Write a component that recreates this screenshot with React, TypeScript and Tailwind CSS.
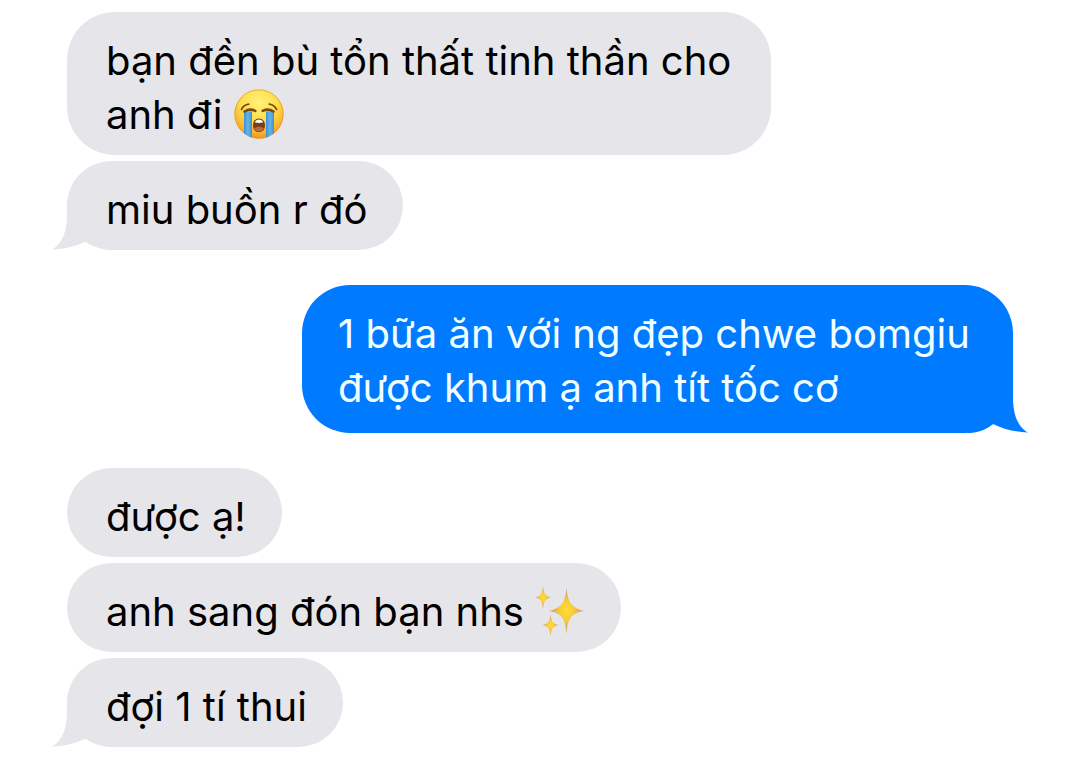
import clsx from 'clsx';
import type { ReactNode } from 'react';

type Message = {
	id: number;
	from: 'me' | 'them';
	body: ReactNode;
	tail?: boolean;
	width?: string;
};

function CryingFace() {
	return (
		<svg
			role="img"
			aria-label="Loudly crying face"
			viewBox="0 0 50 50"
			className="inline-block size-[50px] align-[-10px]"
		>
			<defs>
				<radialGradient id="face" cx="50%" cy="28%" r="74%">
					<stop offset="0" stopColor="#fff27a" />
					<stop offset="0.5" stopColor="#ffdd4a" />
					<stop offset="0.82" stopColor="#fbb02d" />
					<stop offset="1" stopColor="#ee8f1c" />
				</radialGradient>
				<linearGradient id="tear" x1="0" x2="1" y1="0" y2="0">
					<stop offset="0" stopColor="#3f8fcd" />
					<stop offset="0.5" stopColor="#65b5ea" />
					<stop offset="1" stopColor="#3f8fcd" />
				</linearGradient>
				<clipPath id="face-clip">
					<circle cx="25" cy="25" r="24.5" />
				</clipPath>
			</defs>
			<circle cx="25" cy="25" r="24.5" fill="url(#face)" />
			<circle cx="25" cy="25" r="24.2" fill="none" stroke="#e29526" strokeWidth="0.7" />
			<g clipPath="url(#face-clip)">
				<path d="M10 22.5h8v28H10z" fill="url(#tear)" />
				<path d="M32 22.5h8v28h-8z" fill="url(#tear)" />
			</g>
			<g fill="none" stroke="#7b4a12" strokeLinecap="round">
				<path d="M7.5 20.5c1.3-3 3.8-4.8 7.2-5.3M42.5 20.5c-1.3-3-3.8-4.8-7.2-5.3" strokeWidth="1.8" />
				<path d="M10.5 22.5c3-2 7-2.6 10.8-.6M28.7 21.9c3.8-2 7.8-1.4 10.8.6" strokeWidth="2.6" />
			</g>
			<path d="M25 29.5c3.8 0 6 3 6 7 0 3.8-2.200 6.500-6 6.500s-6-2.700-6-6.500c0-4 2.200-7 6-7z" fill="#7a3d12" />
			<path d="M20.8 33.2c.9-1.900 2.300-2.800 4.200-2.800s3.300.9 4.200 2.800c-2.700 1-5.700 1-8.400 0z" fill="#fff" />
			<path d="M20 39.5c2.800-2.500 7.200-2.500 10 0-1 2-2.700 3-5 3s-4-1-5-3z" fill="#b56a42" />
		</svg>
	);
}

function Sparkles() {
	return (
		<svg
			role="img"
			aria-label="Sparkles"
			viewBox="0 0 50 50"
			className="inline-block size-[50px] align-[-10px]"
		>
			<defs>
				<radialGradient id="spark">
					<stop offset="0" stopColor="#ffe02e" />
					<stop offset="0.4" stopColor="#f8cb3a" />
					<stop offset="0.75" stopColor="#dfa65a" />
					<stop offset="1" stopColor="#d3a68c" />
				</radialGradient>
			</defs>
			<g fill="url(#spark)">
				<path d="M31.5 1c.9 13 3.5 21 18 24-14.5 1.5-17.1 10-18 23.5C30.6 35 28 26.500 13.5 25c14.5-3 17.1-11 18-24z" />
				<path d="M8 0c.6 7 2 10.300 8 11.500-6 1-7.400 4.500-8 11.500-.6-7-2-10.500-8-11.500C6 10.300 7.400 7 8 0z" />
				<path d="M15.5 28c.6 6.500 2 9.800 8 11-6 1.200-7.400 4.500-8 11-.6-6.500-2-9.800-8-11 6-1.200 7.400-4.500 8-11z" />
			</g>
		</svg>
	);
}

const groups: Message[][] = [
	[
		{
			id: 1,
			from: 'them',
			body: <>bạn đền bù tổn thất tinh thần cho anh đi <CryingFace /></>,
			width: 'max-w-[704px]',
		},
		{ id: 2, from: 'them', body: 'miu buồn r đó', tail: true },
	],
	[
		{
			id: 3,
			from: 'me',
			body: '1 bữa ăn với ng đẹp chwe bomgiu được khum ạ anh tít tốc cơ',
			tail: true,
			width: 'max-w-[711px]',
		},
	],
	[
		{ id: 4, from: 'them', body: 'được ạ!' },
		{ id: 5, from: 'them', body: <>anh sang đón bạn nhs <Sparkles /></> },
		{ id: 6, from: 'them', body: 'đợi 1 tí thui', tail: true },
	],
];

function Tail({ mine }: { mine: boolean }) {
	return (
		<svg
			aria-hidden="true"
			viewBox="0 0 60 50"
			className={clsx(
				'absolute bottom-0 h-[50px] w-[60px]',
				mine
					? '-right-[15px] -scale-x-100 text-[#007aff]'
					: '-left-[15px] text-[#e5e5ea]',
			)}
		>
			<path d="M15 0v15C15 33 9 45 0 49.500c13-.5 25-3.500 35-8.500 7 5.500 14 9 25 9V0z" fill="currentColor" />
		</svg>
	);
}

function Bubble({ message }: { message: Message }) {
	const mine = message.from === 'me';
	return (
		<li
			className={clsx(
				'relative w-fit rounded-[48px] pt-[22px]',
				mine
					? 'self-end bg-[#007aff] px-9 pb-[18px] text-[#f0ffff]'
					: 'self-start bg-[#e5e5ea] pr-9 pb-[13px] pl-[39px] text-black',
				message.width,
			)}
		>
			{message.tail && <Tail mine={mine} />}
			<p className="relative">{message.body}</p>
		</li>
	);
}

export default function App() {
	return (
		<main className="flex min-h-screen flex-col gap-[35px] bg-white px-[67px] pt-3 pb-4 font-['Inter','Liberation_Sans',sans-serif] text-[40px] leading-[54px]">
			{groups.map((group) => (
				<ul key={group[0].id} className="flex flex-col gap-[6px]">
					{group.map((message) => (
						<Bubble key={message.id} message={message} />
					))}
				</ul>
			))}
		</main>
	);
}
